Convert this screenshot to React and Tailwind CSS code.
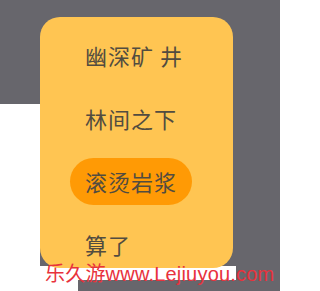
import React from "react";

const items = [
  { label: "幽深矿 井", active: false },
  { label: "林间之下", active: false },
  { label: "滚烫岩浆", active: true },
  { label: "算了", active: false },
];

export default function App() {
  return (
    <div
      className="relative w-[280px] h-[291px] overflow-hidden bg-[#67666c]"
      style={{ fontFamily: '"Noto Sans CJK SC", "Noto Sans", sans-serif' }}
    >
      {/* dimmed scene behind the menu */}
      <div className="absolute left-0 top-[104px] w-[40px] h-[187px] bg-white" />
      <div className="absolute left-0 top-[266px] w-[236px] h-[14px] bg-white" />
      <div className="absolute left-0 top-[266px] w-[78px] h-[25px] bg-white" />

      <div className="relative ml-[40px] pt-[17px]">
        <div className="w-[193px] h-[251px] rounded-[20px] bg-[#ffc552] pl-[30px] pt-[15px] flex flex-col items-start gap-[16px]">
          {items.map((it) => (
            <div
              key={it.label}
              className={
                it.active
                  ? "h-[48px] flex items-center px-[15px] rounded-full bg-[#ff9a05] text-[22px] tracking-[1px] text-[#524c40] whitespace-pre"
                  : "h-[48px] flex items-center px-[15px] rounded-full text-[22px] tracking-[1px] text-[#524c40] whitespace-pre"
              }
            >
              {it.label}
            </div>
          ))}
        </div>
      </div>

      <div
        className="absolute left-[45px] top-[260px] text-[20px] tracking-[0.2px] leading-[28px] text-[#e8323c] whitespace-nowrap"
        style={{ fontFamily: '"Liberation Sans", "Noto Sans CJK SC", sans-serif' }}
      >
        乐久游www.Lejiuyou.com
      </div>
    </div>
  );
}
